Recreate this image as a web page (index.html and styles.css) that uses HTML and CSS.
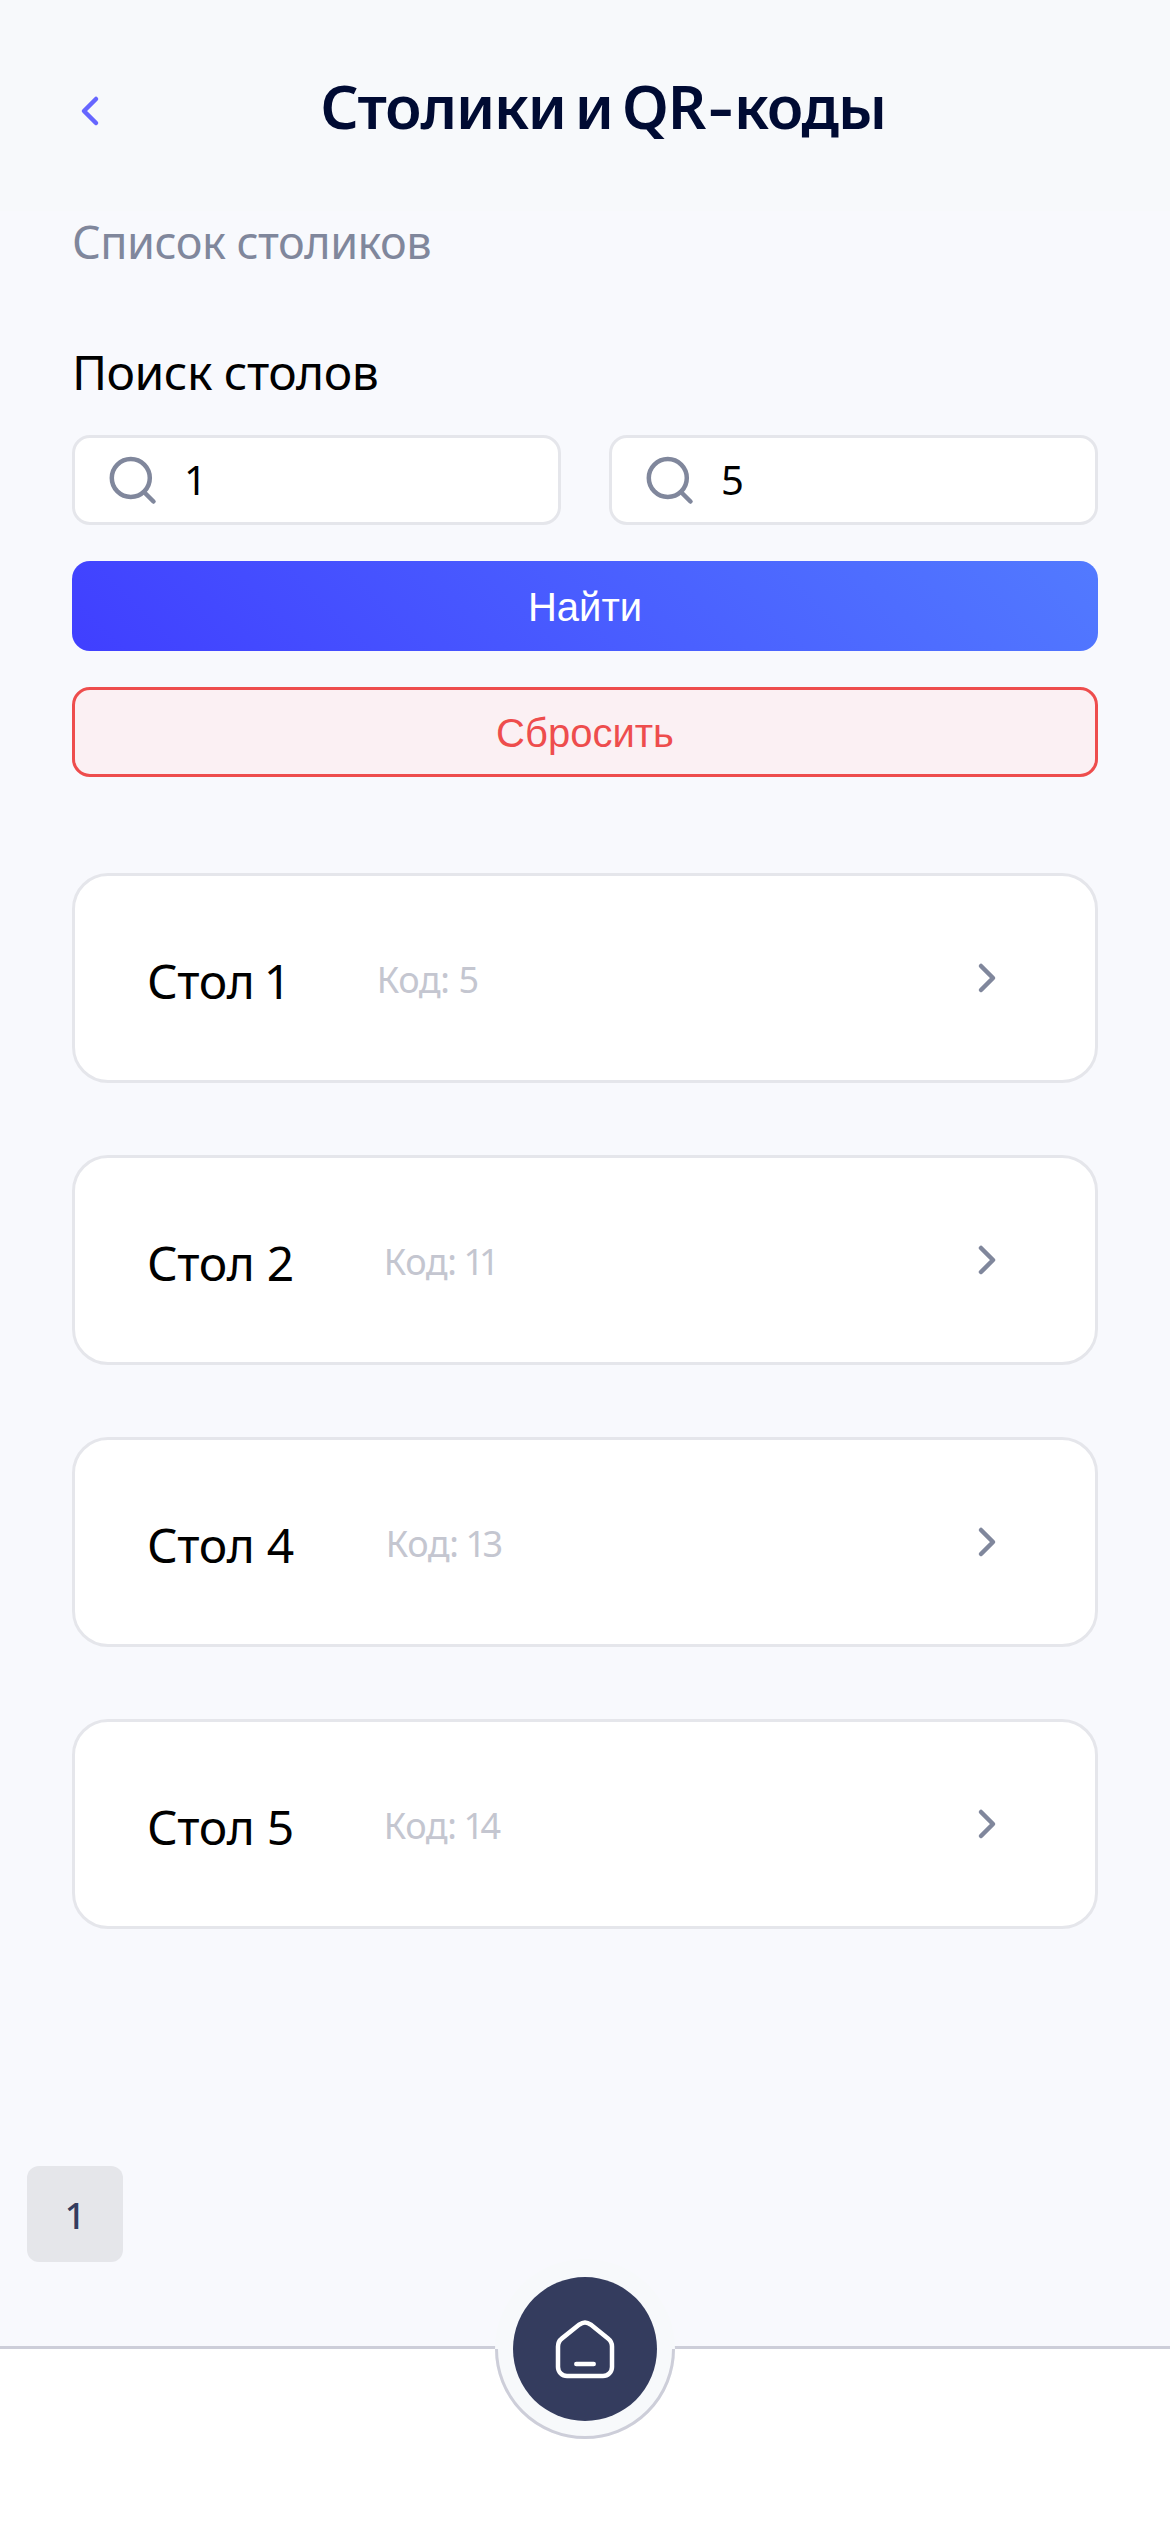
FILE: index.html
```html
<!DOCTYPE html>
<html lang="ru">
<head>
<meta charset="utf-8">
<title>Столики и QR-коды</title>
<link rel="stylesheet" href="styles.css">
</head>
<body>
<div class="page">
  <header class="header">
    <svg class="back" viewBox="0 0 36 36"><path d="M24 6 12 18l12 12"/></svg>
    <h1 class="title">Столики и QR<span class="hyphen">-</span>коды</h1>
  </header>

  <main class="content">
    <p class="subtitle">Список столиков</p>
    <h2 class="label">Поиск столов</h2>

    <div class="filters">
      <div class="field">
        <svg class="search" viewBox="0 0 54 54"><circle cx="25.8" cy="25" r="19"/><path d="m39 39 9.5 9.5"/></svg>
        <span class="value">1</span>
      </div>
      <div class="field">
        <svg class="search" viewBox="0 0 54 54"><circle cx="25.8" cy="25" r="19"/><path d="m39 39 9.5 9.5"/></svg>
        <span class="value">5</span>
      </div>
    </div>
    <button class="button primary">Найти</button>
    <button class="button reset">Сбросить</button>

    <ul class="tables">
      <li class="card">
        <span class="name slim">Стол 1</span>
        <span class="code">Код: <span class="number">5</span></span>
        <svg class="chevron" viewBox="0 0 36 36"><path d="m12 6 12 12-12 12"/></svg>
      </li>
      <li class="card">
        <span class="name">Стол 2</span>
        <span class="code">Код: <span class="number ones">11</span></span>
        <svg class="chevron" viewBox="0 0 36 36"><path d="m12 6 12 12-12 12"/></svg>
      </li>
      <li class="card">
        <span class="name wide">Стол 4</span>
        <span class="code">Код: <span class="number pair">13</span></span>
        <svg class="chevron" viewBox="0 0 36 36"><path d="m12 6 12 12-12 12"/></svg>
      </li>
      <li class="card">
        <span class="name">Стол 5</span>
        <span class="code">Код: <span class="number pair">14</span></span>
        <svg class="chevron" viewBox="0 0 36 36"><path d="m12 6 12 12-12 12"/></svg>
      </li>
    </ul>
  </main>

  <div class="pagination"><span class="page-number">1</span></div>

  <nav class="navbar">
    <div class="ring">
      <div class="home">
        <svg class="house" viewBox="0 0 60 60"><path d="M3 48V27.5Q3 22.5 7 19.4L24.3 5.6Q30 1.4 35.7 5.6L53 19.4Q57 22.5 57 27.5V48a9 9 0 0 1-9 9H12a9 9 0 0 1-9-9ZM21.3 45h17.4"/></svg>
      </div>
    </div>
  </nav>
</div>
</body>
</html>
```
FILE: styles.css
```css
* { box-sizing: border-box; }

body {
  margin: 0;
  background: #f8f9fd;
  font-family: "Noto Sans", sans-serif;
  color: #000;
}

h1, h2, p, ul { margin: 0; padding: 0; font-weight: 400; }

svg {
  display: block;
  flex: none;
  fill: none;
  stroke: currentColor;
  stroke-width: 4.5;
  stroke-linecap: round;
  stroke-linejoin: round;
}

.page {
  display: flex;
  flex-direction: column;
  width: 1170px;
  height: 2532px;
  overflow: hidden;
}

.header {
  display: flex;
  align-items: center;
  height: 211px;
  padding: 11px 72px 0;
  background: #f7f9fb;
}

.back { width: 36px; height: 36px; color: #6666ff; }

.title {
  flex: 1;
  margin-top: -10px;
  text-align: center;
  font-size: 60px;
  font-weight: 600;
  line-height: 84px;
  letter-spacing: -1.2px;
  word-spacing: -5.5px;
  color: #000b33;
}

.hyphen { display: inline-block; margin: 0 5px 0 6px; transform: scaleX(1.3); }

.content {
  display: flex;
  flex-direction: column;
  padding: 0 72px;
}

.subtitle {
  height: 60px;
  margin-top: 1px;
  font-size: 45px;
  line-height: 60px;
  letter-spacing: -.52px;
  color: #80879c;
}

.label {
  margin-top: 68px;
  font-size: 48px;
  line-height: 64px;
  letter-spacing: -.56px;
}

.filters {
  display: grid;
  grid-template-columns: 1fr 1fr;
  gap: 48px;
  margin-top: 31px;
}

.field {
  display: flex;
  align-items: center;
  gap: 25px;
  height: 90px;
  padding: 0 30px;
  border: 3px solid #e5e6eb;
  border-radius: 18px;
  background: #fff;
}

.search { width: 54px; height: 54px; color: #80879c; }

.value { font-size: 40px; line-height: 54px; }

.button {
  height: 90px;
  margin-top: 36px;
  padding: 2px 0 0;
  border: 0;
  border-radius: 18px;
  font: 40px "Liberation Sans", Arial, sans-serif;
}

.primary {
  background: linear-gradient(45deg, #403fff, #527aff);
  color: #fff;
}

.reset {
  border: 3px solid #ee4d4d;
  background: #fbf0f3;
  color: #ee4d4d;
}

.tables {
  display: flex;
  flex-direction: column;
  gap: 72px;
  margin-top: 96px;
  list-style: none;
}

.card {
  display: flex;
  align-items: center;
  height: 210px;
  padding: 0 90px 0 72px;
  border: 3px solid #e5e6eb;
  border-radius: 36px;
  background: #fff;
}

.name {
  margin: 5px 90px 0 0;
  font-size: 48px;
  letter-spacing: -.4px;
}

.slim { margin-right: 86px; word-spacing: -3px; }

.wide { margin-right: 92px; }

.code { margin-top: 2px; font-size: 36px; letter-spacing: -.4px; color: #c4c6d0; }

.ones { margin-left: -2px; letter-spacing: -5px; }

.pair { margin-left: -2px; letter-spacing: -3.5px; }

.chevron { width: 36px; height: 36px; margin-left: auto; color: #80879c; }

.pagination { display: flex; margin-top: 237px; padding-left: 27px; }

.page-number {
  width: 96px;
  height: 96px;
  padding-top: 2px;
  border-radius: 12px;
  background: #e5e6ea;
  color: #343c5e;
  font-size: 36px;
  font-weight: 500;
  line-height: 96px;
  text-align: center;
}

.navbar {
  position: relative;
  flex: 1;
  margin-top: 84px;
  border-top: 3px solid #cdced9;
  background: #fff;
}

.ring {
  position: absolute;
  top: -90px;
  left: 495px;
  display: grid;
  place-items: center;
  width: 180px;
  height: 180px;
  border-radius: 50%;
  background: #f7f9fb;
}

.ring::after {
  content: "";
  position: absolute;
  inset: 0;
  border: 3px solid #cdced9;
  border-radius: 50%;
  clip-path: inset(90px 0 0 0);
}

.home {
  display: grid;
  place-items: center;
  width: 144px;
  height: 144px;
  border-radius: 50%;
  background: #343c5e;
  color: #fff;
}

.house { width: 60px; height: 60px; }
```
